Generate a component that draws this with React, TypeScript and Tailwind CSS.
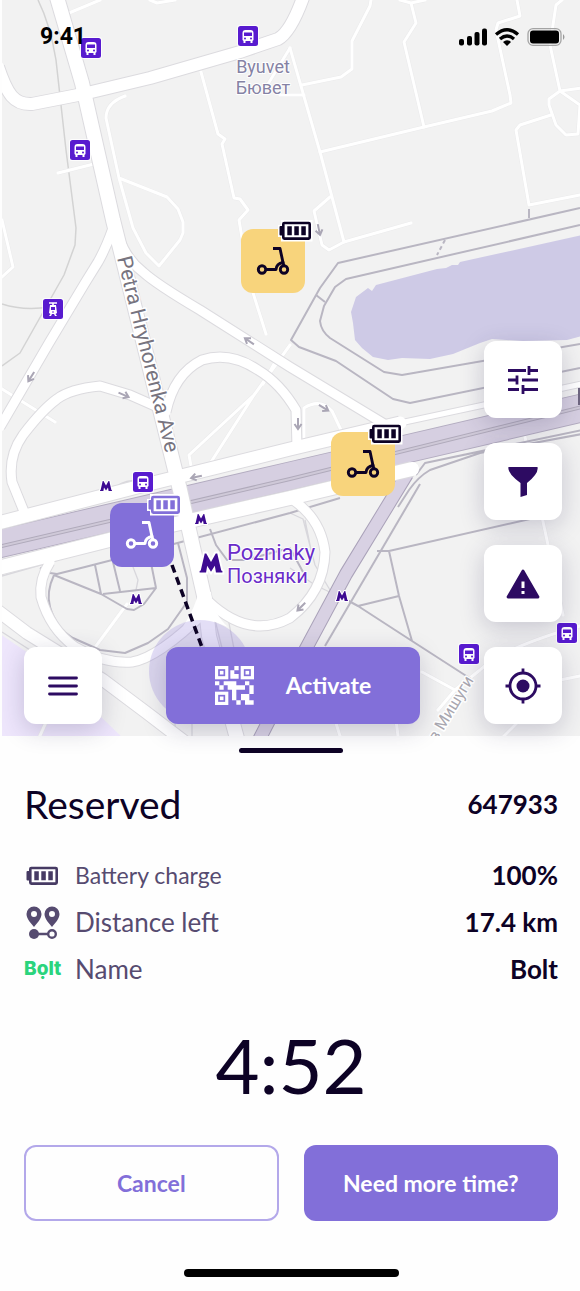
import type { ReactNode } from "react";

type Road = { d: string; w: number };

const minorRoads: Road[] = [
  { d: "M69 13 L100 0", w: 3 },
  { d: "M150 0 L157 3 L175 0", w: 3 },
  { d: "M58 173 L94 164", w: 3 },
  { d: "M125 96 Q106 103 106 118 L119 178 L133 228 L146 253 L159 266 L180 240 L183 233 V222 L178 209 L167 197 L119 178", w: 3 },
  { d: "M201 72 L218 134 L225 139 L222 144 L234 198 L240 199 L248 210 L239 220 L249 280 L266 334", w: 3 },
  { d: "M371 0 L370 6 L352 41 V69 L341 77 L302 85", w: 3 },
  { d: "M290 48 L320 152 L344 242 L411 223", w: 3 },
  { d: "M330 197 L314 211 L322 245 L329 250 L344 242", w: 3 },
  { d: "M268 84 L290 48 M280 95 H304", w: 3 },
  { d: "M400 0 L411 3 L425 0 M411 3 L416 23 L404 42 L424 127", w: 3 },
  { d: "M320 152 L424 127 L492 111 L511 103 L510 95 L496 30 L498 23 L520 16 L517 0", w: 3 },
  { d: "M562 0 L556 5 L550 45 L560 91 L582 88 M560 91 L580 105 L578 134 L566 135 L556 125 L549 105 L549 99 L560 91", w: 3 },
  { d: "M551 115 L520 125 L516 130 L529 205 L580 195", w: 3 },
  { d: "M2 220 L13 267 L2 277 M2 389 L55 422", w: 3 },
  { d: "M290 345 L254 395 L189 455 L191 466 M254 395 L211 462", w: 3 },
  { d: "M274 364 L263 384", w: 3 },
  { d: "M304 440 V408 Q320 398 332 411 L341 430", w: 3 },
  { d: "M525 437 L548 545 L563 615", w: 3 },
  { d: "M127 604 L96 646", w: 3 },
  { d: "M422 672 L455 690 L480 670 Q505 647 580 626 M455 690 L438 710", w: 3 },
  { d: "M504 736 L560 680 L580 676 M340 736 L335 720 M398 736 L396 720", w: 3 },
  { d: "M29 760 L48 718", w: 3 },
];

const roads: Road[] = [
  { d: "M0 427 L49 343 L85 283 L98 262 Q106 248 113 228", w: 9 },
  { d: "M119 238 Q127 260 143 272 Q156 284 200 310 L290 367 L391 428", w: 9 },
  { d: "M-2 67 C7 94 14 105 32 104 L83 94 L150 78 L240 52 L278 39 Q291 32 304 -5", w: 12 },
  { d: "M25 514 L12 482 Q8 456 23 435 Q42 410 57 399 Q70 389 100 386 L130 395 L164 410", w: 9 },
  { d: "M166 412 Q174 374 202 360 Q230 351 258 370 Q280 383 296 410 L297 448", w: 9 },
  { d: "M50 562 Q39 579 41 597 Q50 629 75 647 Q104 664 132 662 Q158 658 205 612", w: 9 },
  { d: "M293 500 Q321 519 325 552 Q324 592 290 618 Q249 640 208 601", w: 9 },
  { d: "M-2 611 L27 633 L103 680 L147 713 L185 742", w: 12 },
  { d: "M-2 523 L145 485 L290 449 L400 423", w: 13 },
  { d: "M400 423 L582 384", w: 5 },
  { d: "M-2 568 L145 531 L290 498 L412 469", w: 14 },
  { d: "M56 -6 L82 83 L113 220 L118 240 L180 490 L205 600 L209 636 L238 742", w: 14 },
];

const footpaths = [
  "M38 0 Q50 24 56 60 L66 150 L76 228 L75 245 L64 275 L20 353 L2 366",
  "M2 304 Q23 311 50 307",
];

const darkPaths = [
  "M580 208 L338 263 L320 288 L291 340 L299 347 L336 361 L393 399 L410 403 L580 368",
  "M580 225 L346 279 L335 287 L324 306 L320 321 Q321 331 330 338 L384 372 L402 375 L580 344",
  "M316 295 L325 302 M529 209 V218",
  "M582 430 L425 463 L416 475 M582 434 L480 453 L430 470 Q418 477 409 490 L398 507",
  "M420 484 L325 646",
  "M377 551 H389 L530 519 M389 551 L399 596 L412 641 L358 606 L399 596 M412 641 L471 679 M358 606 L347 600",
  "M50 573 L57 574 L85 567 L120 558 M54 575 L101 594 L127 609 L134 610 L144 604 L156 588 L103 594 M95 565 L101 594 M113 562 L120 591 M150 558 L156 588",
  "M54 575 Q46 592 50 607 Q56 628 73 638 L100 650 L125 653 L148 643 L168 629 L187 602 L187 578 L178 543",
  "M170 545 L290 513 L340 498 M210 529 L216 545 L227 560 H245 L290 548 L303 572",
  "M40 568 L50 573",
];

const lightPaths = [
  "M133 567 L138 580 L136 590 M2 576 L58 560 M290 513 L303 519 L315 565 L330 590 M305 520 L311 550 M290 568 L315 585 L342 598",
  "M117 486 Q125 480 140 480 M213 612 L235 700 M228 618 L244 700 M208 615 L204 680",
  "M175 720 V740 M192 720 V740 M238 720 L242 740 M2 632 L30 650 L75 685",
];

function MapMark({ x, y, tram = false }: { x: number; y: number; tram?: boolean }) {
  return (
    <g transform={`translate(${x} ${y})`}>
      <rect x="-11" y="-11" width="22" height="22" rx="3" fill="#fff" opacity=".8" />
      <rect x="-10" y="-10" width="20" height="20" rx="2.5" fill="#581bcf" />
      {tram ? (
        <>
          <path d="M-4 -6 H4 M0 -6 V-3" stroke="#fff" strokeWidth="1.6" />
          <path d="M-3 -4 H3 L4 4 L2.500 5 L4 7 H2 L1 5 H-1 L-2 7 H-4 L-2.500 5 L-4 4 Z" fill="#fff" />
          <path d="M-2 -2 H2 V1 H-2 Z" fill="#581bcf" />
          <circle cy="3" r=".8" fill="#581bcf" />
        </>
      ) : (
        <>
          <path d="M-5.500 -3 Q-5.500 -6 -2.500 -6 H2.500 Q5.500 -6 5.500 -3 V4 L4.500 5 V7 H2.500 V5 H-2.500 V7 H-4.500 V5 L-5.500 4 Z" fill="#fff" />
          <rect x="-4" y="-3.500" width="8" height="3.500" fill="#581bcf" />
          <circle cx="-3" cy="2.500" r="1" fill="#581bcf" />
          <circle cx="3" cy="2.500" r="1" fill="#581bcf" />
        </>
      )}
    </g>
  );
}

function Metro({ x, y, size = 1 }: { x: number; y: number; size?: number }) {
  return (
    <path
      transform={`translate(${x} ${y}) scale(${size})`}
      d="M-6 5 V4.200 L-5.400 4 L-3.300 -5 H-2.500 L0 -0.500 L2.500 -5 H3.300 L5.400 4 L6 4.200 V5 H2.600 L2 1.400 L0 4.600 L-2 1.400 L-2.600 5 Z"
      fill="#3d0a91"
      stroke="#fff"
      strokeWidth="2"
      paintOrder="stroke"
    />
  );
}

function Arrow({ x, y, angle }: { x: number; y: number; angle: number }) {
  return (
    <path
      transform={`translate(${x} ${y}) rotate(${angle})`}
      d="M-6 0 H4 M0 -3.500 L5 0 L0 3.500"
      fill="none"
      stroke="#aaa6b5"
      strokeWidth="2"
    />
  );
}

function CityMap() {
  return (
    <svg viewBox="2 0 578 736" preserveAspectRatio="xMinYMin slice" className="h-full w-full" aria-label="Map of Pozniaky" role="img">
      <rect width="580" height="736" fill="#f2f2f2" />
      <path d="M0 634 L50 668 L125 740 H0 Z" fill="#eee6fc" />
      <path
        d="M351 312 L356 297 L368 288 L372 291 L376 285 L437 269 L446 268 L452 265 L458 265 L460 262 L582 235 V336 L567 340 L523 341 L492 339 L480 343 L453 354 L430 359 L402 358 L388 360 L373 357 L362 348 L355 340 L353 323 Z"
        fill="#cecae6"
      />
      <g fill="none" strokeLinejoin="round">
        {footpaths.map((d) => <path key={d} d={d} stroke="#d3d3d3" strokeWidth="1.500" />)}
        {minorRoads.map((r) => <path key={r.d} d={r.d} stroke="#ebebec" strokeWidth={r.w + 1} />)}
        {minorRoads.map((r) => <path key={r.d} d={r.d} stroke="#fff" strokeWidth={r.w} strokeLinecap="round" />)}
        {lightPaths.map((d) => <path key={d} d={d} stroke="#d8d7dc" strokeWidth="1.300" />)}
        {darkPaths.map((d) => <path key={d} d={d} stroke="#b9b6c2" strokeWidth="2" />)}
        <path d="M445 240 L437 255" stroke="#b9b6c2" strokeWidth="2" strokeDasharray="4 3" />
        <path d="M407 474 L346 574 L302 656 L258 742" stroke="#aaa2b9" strokeWidth="14" />
        <path d="M407 474 L346 574 L302 656 L258 742" stroke="#d8d1e3" strokeWidth="12" />
        <path d="M-2 544 L290 476 L582 408" stroke="#b3acc0" strokeWidth="29" />
        <path d="M-2 544 L290 476 L582 408" stroke="#d6cfe1" strokeWidth="27" />
        <path d="M-2 547 L290 479 L582 407" stroke="#b0aabb" strokeWidth="4" />
        <path d="M-2 547 L290 479 L582 407" stroke="#cfc9d8" strokeWidth="2" />
        {roads.map((r) => <path key={r.d} d={r.d} stroke="#dcdbdf" strokeWidth={r.w + 2} />)}
        {roads.map((r) => <path key={r.d} d={r.d} stroke="#fff" strokeWidth={r.w} strokeLinecap="round" />)}
        <path d="M199 590 Q196 607 182 628 L205 618 L228 627 Q213 614 211 592 Z" fill="#fff" />
      </g>
      <Arrow x={249} y={341} angle={215} />
      <Arrow x={31} y={377} angle={122} />
      <Arrow x={124} y={395} angle={24} />
      <Arrow x={298} y={424} angle={90} />
      <Arrow x={324} y={408} angle={32} />
      <Arrow x={196} y={477} angle={168} />
      <Arrow x={301} y={607} angle={135} />
      <Arrow x={319} y={230} angle={78} />
      <circle cx="200" cy="671" r="51" fill="#8470da" opacity=".23" />
      <path d="M172 565 L203 650" stroke="#0d0225" strokeWidth="3.500" strokeDasharray="8 5" />
      <MapMark x={91} y={48} />
      <MapMark x={248} y={36} />
      <MapMark x={80} y={150} />
      <MapMark x={143} y={482} />
      <MapMark x={469} y={654} />
      <MapMark x={567} y={633} />
      <MapMark x={53} y={309} tram />
      <Metro x={106} y={486} />
      <Metro x={201} y={519} />
      <Metro x={136} y={599} />
      <Metro x={342} y={596} />
      <Metro x={211} y={563} size={1.9} />
      <rect x="578" y="388" width="4" height="17" fill="#6f6681" />
      <g fontFamily="Roboto, sans-serif" stroke="#fff" strokeWidth="3" strokeLinejoin="round" paintOrder="stroke">
        <g fill="#8582a4" fontSize="18" textAnchor="middle" strokeWidth="2">
          <text x="263" y="73">Byuvet</text>
          <text x="263" y="94">Бювет</text>
        </g>
        <g fill="#6a2cc9" fontSize="22" strokeWidth="2">
          <text x="227" y="560">Pozniaky</text>
          <text x="227" y="583" fontSize="20">Позняки</text>
        </g>
        <text transform="translate(117 258) rotate(76)" fontSize="21" fill="#77747f">Petra Hryhorenka Ave</text>
        <text transform="translate(474 680) rotate(-59)" fontSize="16" textAnchor="end" fill="#a9a7b0">в Мишуги</text>
      </g>
    </svg>
  );
}

function BatteryIcon({ halo = false }: { halo?: boolean }) {
  return (
    <svg width="34" height="20" viewBox="0 0 34 20" className="overflow-visible" aria-hidden="true">
      {halo && <path d="M3 -1 H33.500 V20.500 H2 V16 H-1 V4 H2 V-1 Z" fill="#fff" />}
      <rect x="4.300" y="2" width="26.400" height="15.600" rx="1" fill="#fff" stroke="currentColor" strokeWidth="2.600" />
      <path d="M3.500 5 H1.500 Q.5 5 .5 6 V13.500 Q.5 14.500 1.500 14.500 H3.500 Z" fill="currentColor" />
      <path d="M8.300 5.300 H12.800 V14.300 H8.300 Z M15.300 5.300 H19.800 V14.300 H15.300 Z M22.300 5.300 H26.800 V14.300 H22.300 Z" fill="currentColor" />
    </svg>
  );
}

function ScooterPin({ place, color, label, badge }: { place: string; color: string; label: string; badge: string }) {
  return (
    <button type="button" aria-label={label} className={`absolute flex size-16 items-center justify-center rounded-xl ${place} ${color}`}>
      <svg width="34" height="30" viewBox="0 0 34 30" fill="none" stroke="currentColor" strokeWidth="2.900" aria-hidden="true">
        <circle cx="6" cy="23.500" r="3.700" />
        <circle cx="28" cy="23.500" r="3.700" />
        <path d="M10 23.500 H20 Q20.500 17.500 27 16.500 L24 2.500 H17" strokeLinejoin="round" />
        <path d="M26.500 15 L28 20" />
      </svg>
      <span className={`absolute -top-2 -right-2 ${badge}`}>
        <BatteryIcon halo />
      </span>
    </button>
  );
}

function MapButton({ label, children }: { label: string; children: ReactNode }) {
  return (
    <button
      type="button"
      aria-label={label}
      className="flex h-[77px] w-[78px] shrink-0 items-center justify-center rounded-xl bg-white text-[#2d0b62] shadow-[0_6px_24px_rgba(45,40,85,0.22)]"
    >
      <svg width="36" height="36" viewBox="0 0 36 36" fill="none" stroke="currentColor" strokeWidth="2.800" aria-hidden="true">
        {children}
      </svg>
    </button>
  );
}

function QrIcon() {
  return (
    <svg width="39" height="39" viewBox="0 0 117 117" fill="white" aria-hidden="true">
      {["0 0", "77 0", "0 77"].map((p) => (
        <g key={p} transform={`translate(${p})`}>
          <rect width="40" height="40" />
          <rect x="12" y="12" width="16" height="16" fill="none" stroke="#826fd9" strokeWidth="5" />
        </g>
      ))}
      <path d="M58 0 H71 V13 H58 Z M46 13 H58 V24 H71 V38 H46 Z M0 46 H13 V58 H26 V71 H13 V58 H0 Z M26 46 H64 V58 H90 V71 H64 V84 H51 V71 H38 V58 H26 Z M90 46 H103 V58 H90 Z M103 58 H116 V84 H103 Z M51 71 H64 V103 H51 Z M78 84 H103 V103 H116 V116 H90 V103 H78 Z M64 103 H77 V116 H64 Z" />
    </svg>
  );
}

function DistanceIcon() {
  return (
    <svg width="34" height="34" viewBox="0 0 34 34" fill="currentColor" aria-hidden="true">
      <path fillRule="evenodd" d="M8 0.500 A7.500 7.500 0 0 0 0.500 8 C0.500 13 5 17 8 21 C11 17 15.500 13 15.500 8 A7.500 7.500 0 0 0 8 0.500 Z M8 5 A3 3 0 1 1 8 11 A3 3 0 0 1 8 5 Z M26 0.500 A7.500 7.500 0 0 0 18.500 8 C18.500 13 23 17 26 21 C29 17 33.500 13 33.500 8 A7.500 7.500 0 0 0 26 0.500 Z M26 5 A3 3 0 1 1 26 11 A3 3 0 0 1 26 5 Z" />
      <circle cx="8" cy="28" r="5" />
      <path d="M10 28 H22" stroke="currentColor" strokeWidth="2.500" />
      <circle cx="26" cy="28" r="3.800" fill="none" stroke="currentColor" strokeWidth="2.400" />
    </svg>
  );
}

function StatusBar() {
  return (
    <header className="flex h-[74px] items-center justify-between pr-[14px] pl-10 text-black">
      <time className="font-[Roboto,sans-serif] text-[23px] font-bold">9:41</time>
      <svg width="107" height="18" viewBox="0 0 107 18" role="img" aria-label="Signal, Wi-Fi and battery">
        <rect x="0" y="11" width="5" height="6.500" rx="2" />
        <rect x="8" y="8" width="5" height="9.500" rx="2" />
        <rect x="15.500" y="4" width="5" height="13.500" rx="2" />
        <rect x="23" y="0.500" width="5" height="17" rx="2" />
        <path d="M37 6.500 Q48 -3 59 6.500 M41 11 Q48 5 55 11" fill="none" stroke="black" strokeWidth="3.300" />
        <path d="M44 14 Q48 10.500 52 14 L48 18 Z" />
        <rect x="69" y="0.700" width="33" height="16.600" rx="5" fill="none" stroke="#a3a3a3" strokeWidth="1.300" />
        <rect x="71" y="2.500" width="29" height="13" rx="3" />
        <path d="M104 6 Q107 9 104 12 Z" fill="#999" />
      </svg>
    </header>
  );
}

function DetailRow({ icon, label, value }: { icon: ReactNode; label: ReactNode; value: string }) {
  return (
    <div className="flex h-[47px] items-center justify-between">
      <dt className="flex items-center text-[#564b70]">
        <span className="flex w-[51px] items-center">{icon}</span>
        {label}
      </dt>
      <dd className="text-[26px] font-bold">{value}</dd>
    </div>
  );
}

export default function App() {
  return (
    <main className="min-h-screen bg-[#fefefe] font-[Lato,sans-serif] text-[#0d0225]">
      <section className="relative" aria-label="Scooter map">
        <div className="absolute inset-y-0 right-0 left-0.5 overflow-hidden">
          <div className="relative aspect-[578/736] w-full">
            <CityMap />
            <ScooterPin place="left-[41.3%] top-[31.1%]" color="bg-[#f8d47c] text-[#0d0225]" badge="text-[#0d0225]" label="Scooter near Byuvet" />
            <ScooterPin place="left-[57%] top-[58.7%]" color="bg-[#f8d47c] text-[#0d0225]" badge="text-[#0d0225]" label="Scooter on the highway" />
            <ScooterPin place="left-[18.7%] top-[68.4%]" color="bg-[#826fd9] text-white" badge="text-[#826fd9]" label="Reserved scooter" />
          </div>
        </div>
        <div className="pointer-events-none relative flex flex-col [&_button]:pointer-events-auto">
          <StatusBar />
          <div className="flex flex-col items-end gap-[25px] pt-[267px] pr-[18px] pb-[25px]">
            <MapButton label="Settings">
              <path d="M3 8.500 H21 M24 8.500 H33 M24 4 V13 M3 18 H12 M17 18 H33 M12 13.500 V22.500 M3 27.500 H14 M18 27.500 H33 M18 23 V32" />
            </MapButton>
            <MapButton label="Filter">
              <path d="M3.500 3 H32.500 Q34 9 22 19 V31 L15.500 33 V19 Q2 9 3.500 3 Z" fill="currentColor" stroke="none" />
            </MapButton>
            <MapButton label="Report a problem">
              <path d="M18 5 L33 31 H3 Z" fill="currentColor" strokeLinejoin="round" />
              <path d="M18 15.500 V22 M18 25 V28" stroke="white" strokeWidth="3" />
            </MapButton>
          </div>
          <div className="flex items-center gap-16 pr-[18px] pb-3 pl-6">
            <MapButton label="Menu">
              <path d="M4.500 10 H31.500 M4.500 18 H31.500 M4.500 26 H31.500" strokeLinecap="round" />
            </MapButton>
            <button type="button" className="flex h-[77px] flex-1 items-center justify-center gap-8 rounded-xl bg-[#826fd9] text-[23px] font-bold text-white shadow-[0_6px_24px_rgba(45,40,85,0.22)]">
              <QrIcon />
              Activate
            </button>
            <MapButton label="My location">
              <circle cx="18" cy="18" r="13" />
              <circle cx="18" cy="18" r="6.500" fill="currentColor" stroke="none" />
              <path d="M18 0.500 V6 M18 30 V35.500 M0.500 18 H6 M30 18 H35.500" />
            </MapButton>
          </div>
        </div>
      </section>

      <section className="relative flex flex-col pr-[22px] pb-[14px] pl-6 pt-3" aria-label="Reservation">
        <div className="h-[5px] w-[104px] self-center rounded-full bg-[#0d0225]" />
        <div className="flex h-[102px] items-center justify-between">
          <h1 className="text-[39px]">Reserved</h1>
          <p className="text-[26px] font-bold">647933</p>
        </div>
        <dl className="-mt-[3px]">
          <DetailRow icon={<span className="ml-0.5 text-[#463a63]"><BatteryIcon /></span>} label={<span className="text-[23px]">Battery charge</span>} value="100%" />
          <DetailRow icon={<span className="ml-0.5"><DistanceIcon /></span>} label={<span className="text-[26px]">Distance left</span>} value="17.4 km" />
          <DetailRow
            icon={<span className="font-[Inter,sans-serif] text-[19px] font-extrabold text-[#2bd47d]">Bọlt</span>}
            label={<span className="text-[26px]">Name</span>}
            value="Bolt"
          />
        </dl>
        <p className="pt-7 pb-9 text-center text-[76px] leading-[88px]">4:52</p>
        <div className="grid grid-cols-2 gap-[25px] text-[23px] font-bold">
          <button type="button" className="h-[76px] rounded-xl border-2 border-[#b3a8ea] text-[#826fd9]">Cancel</button>
          <button type="button" className="h-[76px] rounded-xl bg-[#826fd9] text-white">Need more time?</button>
        </div>
        <div className="mt-12 h-2 w-[215px] self-center rounded-full bg-black" />
      </section>
    </main>
  );
}
